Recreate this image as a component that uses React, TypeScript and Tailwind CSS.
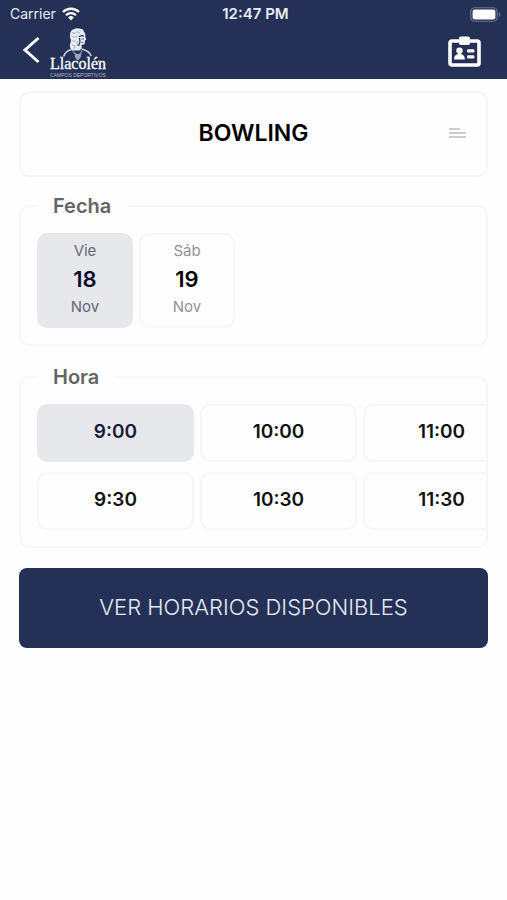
import { useState } from 'react';

const DAYS = [
    { weekday: 'Vie', day: '18', month: 'Nov' },
    { weekday: 'Sáb', day: '19', month: 'Nov' },
];

const HOURS = ['9:00', '10:00', '11:00', '9:30', '10:30', '11:30'];

function WifiIcon() {
    return (
        <svg viewBox="0 0 18 14" className="h-3.5 w-[18px]" fill="none" aria-hidden="true">
            <path d="M1 5a11.5 11.5 0 0 1 16 0" stroke="white" strokeWidth="2.4" />
            <path d="M4 8.2a7.2 7.2 0 0 1 10 0" stroke="white" strokeWidth="2.2" />
            <path d="M6.2 10.4a4 4 0 0 1 5.6 0L9 13.4z" fill="white" />
        </svg>
    );
}

function BatteryIcon() {
    return (
        <svg viewBox="0 0 31 15" className="h-[15px] w-[31px]" fill="none" aria-hidden="true">
            <rect x="0.75" y="0.75" width="26.5" height="13.5" rx="4" stroke="#6b7392" strokeWidth="1.2" />
            <rect x="2.6" y="2.6" width="22.8" height="9.8" rx="2" fill="white" />
            <path d="M29 5c1.8.8 1.8 4.2 0 5z" fill="#6b7392" />
        </svg>
    );
}

function StatusBar() {
    return (
        <div className="grid h-7 grid-cols-3 items-center pr-1.5 pl-2.5 text-sm leading-5 text-[#e9ecf5]">
            <div className="flex items-center gap-1.5">
                <span>Carrier</span>
                <WifiIcon />
            </div>
            <span className="text-center text-[15px] font-semibold">12:47 PM</span>
            <div className="flex justify-end">
                <BatteryIcon />
            </div>
        </div>
    );
}

function Logo() {
    return (
        <svg viewBox="0 0 56 50" className="h-[50px] w-14" role="img" aria-label="Llacolén Campos Deportivos">
            {/* Hair and face */}
            <path
                d="M21 3.500c1-2.500 3-2 4.500-3 2-.8 3.500 0 5 .3 2.500.2 3 1.500 3.500 3.200 1.500 1 1.500 3 1.200 4.500l1 3-1.200 1-.2 2.800c-.6 1.800-2 1.500-3.300 1.200l.3 4-2.300 2h-6.500c-2.500-1-3.500-3-3-6 .5-2 1-3 .8-5-.8-2-1-2.500-.8-4.500.1-1.500.3-2.500 1-3.500z"
                fill="#e6eaf2"
            />
            <path d="M29 9c1.500-1.500 3.500-1.800 5-.8M29.500 10l.5 4-1.500 4" stroke="#26315a" strokeWidth="1.200" fill="none" />
            <path d="M31.500 11h2.500M31.500 14.500h2" stroke="#4c5779" strokeWidth="0.900" />
            <path d="M22 4.500l3 1 2-2 3 2M21.500 8l3 1.500 3-1.500M22.500 12.500l3 1M22 17l3 .8-1 3M27 13l.5 5" stroke="#8a94b0" strokeWidth="0.700" fill="none" />
            {/* Shoulders */}
            <path d="M21.500 21.500c-4 1-6.500 2.500-7.800 7M32 21c5 1.500 8 3 9.200 7" stroke="#cdd3e2" strokeWidth="1.500" fill="none" />
            <path d="M22 22l3 4M32 22l-1.500 4" stroke="#9fa8c1" strokeWidth="1" />
            <path d="M24.500 25l3 1 4-1-.7 4-2 3h-2l-1.800-3z" fill="#98a2bf" />
            <text
                x="28"
                y="41"
                textAnchor="middle"
                fill="white"
                stroke="white"
                strokeWidth="0.300"
                className="font-['Liberation_Serif',serif] text-[16px]"
            >
                Llacolén
            </text>
            <text
                x="28"
                y="49"
                textAnchor="middle"
                fill="#b4bbd0"
                className="font-['Liberation_Sans',sans-serif] text-[5px]"
            >
                CAMPOS DEPORTIVOS
            </text>
        </svg>
    );
}

function BadgeIcon() {
    return (
        <svg viewBox="0 0 33 31" className="h-[31px] w-[33px]" fill="white" aria-hidden="true">
            <rect x="2" y="5" width="29" height="24" rx="1.800" fill="none" stroke="white" strokeWidth="3.600" />
            <rect x="11" y="0.500" width="11" height="8.500" rx="1.800" />
            <circle cx="11.500" cy="14.600" r="3.200" />
            <path d="M9.800 15h3.400v3.300c2.200.6 3.700 1.600 3.700 5.200H6.100c0-3.600 1.500-4.600 3.700-5.200z" />
            <rect x="19" y="13.300" width="7.400" height="3.200" rx="1.200" />
            <rect x="19" y="19.300" width="7.400" height="3.200" rx="1.200" />
        </svg>
    );
}

function Header() {
    return (
        <header className="bg-[#243056]">
            <StatusBar />
            <div className="flex items-start justify-between pr-[26px] pl-[22px]">
                <div className="flex items-start gap-2">
                    <button type="button" aria-label="Volver" className="mt-2">
                        <svg viewBox="0 0 20 28" className="h-7 w-5" fill="none">
                            <path d="M16.500 2L3 14l13.500 12" stroke="white" strokeWidth="3" />
                        </svg>
                    </button>
                    <Logo />
                </div>
                <button type="button" aria-label="Credencial" className="mt-2 pb-3">
                    <BadgeIcon />
                </button>
            </div>
        </header>
    );
}

function DatePicker() {
    const [selected, setSelected] = useState(0);

    return (
        <fieldset className="min-w-0 rounded-[10px] border-2 border-[#f6f6f7] px-4 pb-4">
            <legend className="px-4 text-xl leading-[26px] font-semibold text-[#656565]">Fecha</legend>
            <div className="flex gap-1.5 pt-3.5">
                {DAYS.map(({ weekday, day, month }, i) => (
                    <button
                        key={day}
                        type="button"
                        aria-pressed={selected === i}
                        onClick={() => setSelected(i)}
                        className={
                            selected === i
                                ? 'flex h-[95px] w-24 flex-col items-center rounded-[10px] border-2 border-[#e7e8ec] bg-[#e7e8ec] pt-1 text-[#656775]'
                                : 'flex h-[95px] w-24 flex-col items-center rounded-[10px] border-2 border-[#f6f6f7] pt-1 text-[#929292]'
                        }
                    >
                        <span className="text-[15px] leading-6">{weekday}</span>
                        <span
                            className={
                                selected === i
                                    ? 'text-[22px] leading-8 font-semibold text-[#0c0f2b]'
                                    : 'text-[22px] leading-8 font-semibold text-black'
                            }
                        >
                            {day}
                        </span>
                        <span className="text-[15px] leading-6">{month}</span>
                    </button>
                ))}
            </div>
        </fieldset>
    );
}

function HourPicker() {
    const [selected, setSelected] = useState('9:00');

    return (
        <fieldset className="min-w-0 rounded-[10px] border-2 border-[#f6f6f7] pb-4 pl-4">
            <legend className="px-4 text-xl leading-[26px] font-semibold text-[#656565]">Hora</legend>
            {/* Scrolls sideways, the last column runs past the edge */}
            <div className="overflow-x-auto pt-3.5 [scrollbar-width:none]">
                <div className="grid w-max grid-cols-3 gap-x-1.5 gap-y-2.5">
                    {HOURS.map((hour) => (
                        <button
                            key={hour}
                            type="button"
                            aria-pressed={selected === hour}
                            onClick={() => setSelected(hour)}
                            className={
                                selected === hour
                                    ? 'h-[58px] w-[157px] rounded-[10px] border-2 border-[#e7e8ec] bg-[#e7e8ec] pb-0.5 text-[19px] leading-6 font-semibold text-[#181c36]'
                                    : 'h-[58px] w-[157px] rounded-[10px] border-2 border-[#f6f6f7] pb-0.5 text-[19px] leading-6 font-semibold text-[#111111]'
                            }
                        >
                            {hour}
                        </button>
                    ))}
                </div>
            </div>
        </fieldset>
    );
}

export default function App() {
    return (
        <div className="min-h-screen bg-[#fefefe] font-[Inter,sans-serif]">
            <Header />
            <main className="flex flex-col px-[19px] pt-3">
                <button
                    type="button"
                    className="grid h-[86px] grid-cols-[1fr_auto_1fr] items-center rounded-[10px] border-2 border-[#f6f6f7] px-5 pb-0.5"
                >
                    <span className="col-start-2 text-[23px] leading-8 font-semibold text-black">BOWLING</span>
                    <svg viewBox="0 0 17 12" className="h-3 w-[17px] justify-self-end" fill="none" aria-hidden="true">
                        <path d="M0 2h11M0 6h17M0 10h17" stroke="#bdbdbd" strokeWidth="1.500" />
                    </svg>
                </button>
                <div className="mt-4 flex flex-col gap-[18px]">
                    <DatePicker />
                    <HourPicker />
                </div>
                <button
                    type="button"
                    className="mt-5 h-20 rounded-lg bg-[#243056] pb-0.5 text-[22px] leading-7 font-light text-[#e4eaf4]"
                >
                    VER HORARIOS DISPONIBLES
                </button>
            </main>
        </div>
    );
}
